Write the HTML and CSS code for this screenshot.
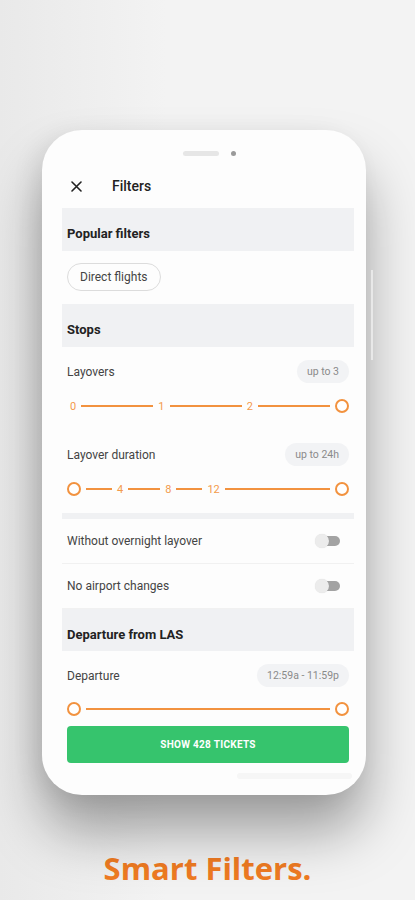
FILE: index.html
```html
<!DOCTYPE html>
<html lang="en">
<head>
<meta charset="UTF-8">
<meta name="viewport" content="width=device-width, initial-scale=1.0">
<title>Smart Filters</title>
<link rel="stylesheet" href="styles.css">
</head>
<body>
<div class="page">
    <div class="phone">
        <div class="side-btn"></div>
        <div class="notch">
            <span class="speaker"></span>
            <span class="camera"></span>
        </div>
        <div class="screen">
            <div class="topbar">
                <svg class="close" width="11" height="11" viewBox="0 0 11 11">
                    <path d="M1 1L10 10M10 1L1 10" stroke="#222" stroke-width="1.6" stroke-linecap="round"/>
                </svg>
                <span class="title">Filters</span>
            </div>

            <div class="band">Popular filters</div>
            <div class="chips">
                <span class="chip">Direct flights</span>
            </div>

            <div class="band">Stops</div>
            <div class="range">
                <div class="range-head">
                    <span class="label">Layovers</span>
                    <span class="badge">up to 3</span>
                </div>
                <div class="slider slider-steps">
                    <span class="tick">0</span>
                    <span class="seg"></span>
                    <span class="tick">1</span>
                    <span class="seg"></span>
                    <span class="tick">2</span>
                    <span class="seg"></span>
                    <span class="knob"></span>
                </div>
            </div>
            <div class="range">
                <div class="range-head">
                    <span class="label">Layover duration</span>
                    <span class="badge">up to 24h</span>
                </div>
                <div class="slider">
                    <span class="knob"></span>
                    <span class="seg seg-s"></span>
                    <span class="tick">4</span>
                    <span class="seg seg-m"></span>
                    <span class="tick">8</span>
                    <span class="seg seg-s"></span>
                    <span class="tick">12</span>
                    <span class="seg"></span>
                    <span class="knob"></span>
                </div>
            </div>
            <div class="divider"></div>

            <div class="switch-row">
                <span class="label">Without overnight layover</span>
                <span class="toggle"><span class="thumb"></span></span>
            </div>
            <div class="switch-row">
                <span class="label">No airport changes</span>
                <span class="toggle"><span class="thumb"></span></span>
            </div>

            <div class="band band-short">Departure from LAS</div>
            <div class="range range-last">
                <div class="range-head">
                    <span class="label">Departure</span>
                    <span class="badge">12:59a - 11:59p</span>
                </div>
                <div class="slider">
                    <span class="knob"></span>
                    <span class="seg"></span>
                    <span class="knob"></span>
                </div>
            </div>

            <button class="show-btn">SHOW 428 TICKETS</button>
            <div class="ghost"></div>
        </div>
    </div>
    <h1 class="caption">Smart Filters.</h1>
</div>
</body>
</html>
```

FILE: styles.css
```css
body {
    margin: 0;
    background: linear-gradient(90deg, #e9e9e9 0%, #f3f3f3 40%, #f3f3f3 100%);
    font-family: Roboto, "Liberation Sans", sans-serif;
    height: 900px;
    overflow: hidden;
}

.page {
    padding-top: 130px;
}

.phone {
    position: relative;
    width: 324px;
    height: 665px;
    margin-left: 42px;
    background-color: #fdfdfd;
    border-radius: 40px;
    box-shadow: 0 38px 55px rgba(0, 0, 0, 0.34), -8px 4px 24px rgba(0, 0, 0, 0.07);
}

/* faint volume key on the right */
.side-btn {
    position: absolute;
    right: -7px;
    top: 140px;
    width: 2px;
    height: 90px;
    background-color: #e8e8e8;
}

.notch {
    display: flex;
    justify-content: center;
    align-items: center;
    gap: 12px;
    height: 34px;
    padding: 6px 0 0 10px;
}

.speaker {
    width: 36px;
    height: 5px;
    border-radius: 3px;
    background-color: #e6e6e6;
}

.camera {
    width: 5px;
    height: 5px;
    border-radius: 50%;
    background-color: #9a9a9a;
}

.screen {
    margin: 0 12px 0 20px;
}

.topbar {
    display: flex;
    align-items: center;
    height: 32px;
    padding: 0 0 6px 9px;
}

.close {
    margin-right: 30px;
}

.title {
    font-size: 14px;
    font-weight: 500;
    color: #222;
}

.band {
    height: 43px;
    line-height: 52px;
    padding-left: 5px;
    background-color: #f0f1f3;
    font-size: 13px;
    font-weight: 700;
    color: #222;
}

.band-short {
    height: 42px;
    line-height: 51px;
}

.chips {
    padding: 12px 5px 13px;
}

.chip {
    display: inline-block;
    height: 26px;
    line-height: 26px;
    padding: 0 12px;
    border: 1px solid #dcdcdc;
    border-radius: 14px;
    font-size: 12px;
    color: #444;
}

.range {
    padding: 13px 5px 17px;
}

.range-last {
    padding-bottom: 10px;
}

.range-last .slider {
    margin-top: 15px;
}

.range-head {
    display: flex;
    justify-content: space-between;
    align-items: center;
}

.label {
    font-size: 12px;
    color: #444;
}

.badge {
    height: 23px;
    line-height: 23px;
    padding: 0 10px;
    border-radius: 12px;
    background-color: #f2f3f5;
    font-size: 10.5px;
    color: #8a8a8a;
}

.slider {
    display: flex;
    align-items: center;
    gap: 5px;
    height: 14px;
    margin-top: 16px;
}

.slider-steps {
    padding-left: 3px;
}

.seg {
    flex: 1;
    height: 2px;
    background-color: #f2923f;
}

.seg-s {
    flex: 0 0 26px;
}

.seg-m {
    flex: 0 0 32px;
}

.tick {
    font-size: 11px;
    color: #f39a4c;
}

.knob {
    flex: 0 0 14px;
    height: 14px;
    box-sizing: border-box;
    border: 2px solid #f2923f;
    border-radius: 50%;
    background-color: #fff;
}

.divider {
    height: 6px;
    background-color: #f0f1f3;
}

.switch-row {
    display: flex;
    justify-content: space-between;
    align-items: center;
    height: 44px;
    padding: 0 14px 0 5px;
    border-bottom: 1px solid #f1f1f1;
}

.switch-row:last-of-type {
    border-bottom: none;
}

.toggle {
    position: relative;
    width: 24px;
    height: 10px;
    border-radius: 5px;
    background-color: #a3a3a3;
}

.thumb {
    position: absolute;
    left: -1px;
    top: -2px;
    width: 14px;
    height: 14px;
    border-radius: 50%;
    background-color: #ececec;
    box-shadow: 0 0 1px rgba(0, 0, 0, 0.15);
}

.show-btn {
    display: block;
    width: 282px;
    height: 37px;
    margin-left: 5px;
    border: none;
    border-radius: 4px;
    background-color: #36c46d;
    color: #fff;
    font-family: Roboto, "Liberation Sans", sans-serif;
    font-size: 10px;
    font-weight: 700;
    letter-spacing: 0.3px;
}

.ghost {
    width: 115px;
    height: 6px;
    margin: 10px 0 0 175px;
    border-radius: 3px;
    background-color: #f6f6f6;
}

.caption {
    margin: 52px 0 0;
    text-align: center;
    font-family: "Open Sans", sans-serif;
    font-size: 31px;
    font-weight: 700;
    color: #f07b22;
}
```
